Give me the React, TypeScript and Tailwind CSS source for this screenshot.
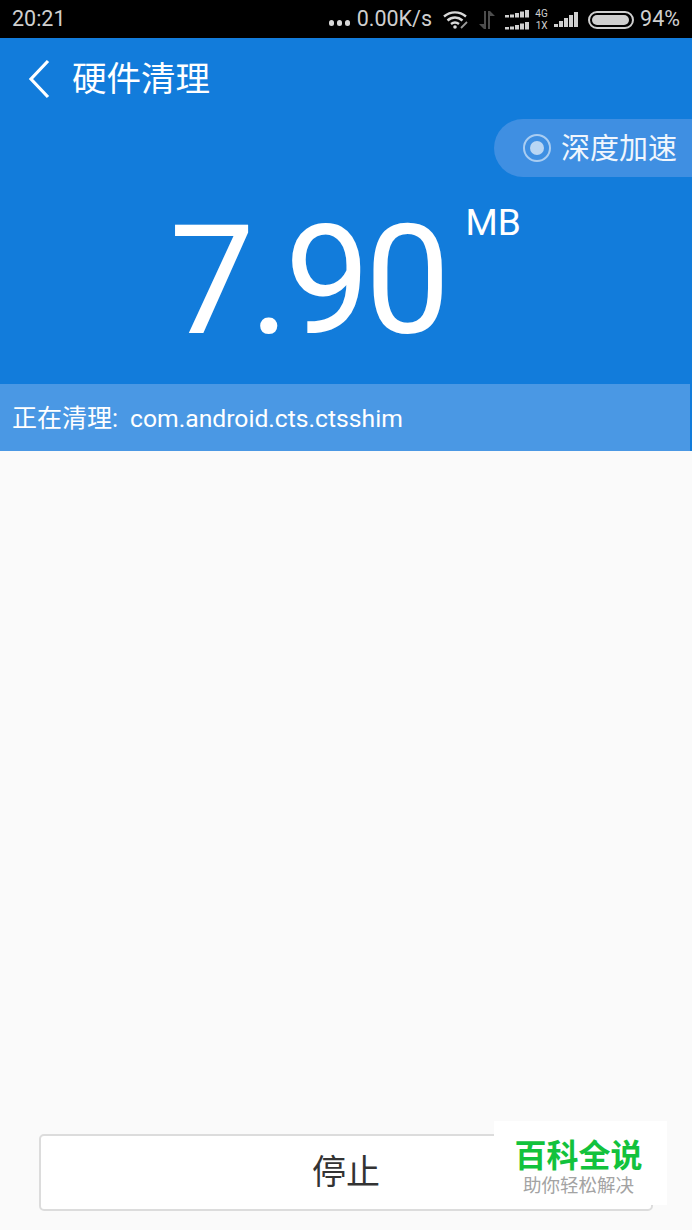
const cjk = "font-['Roboto','Noto_Sans_CJK_SC',sans-serif]"

const SignalBars = ({ className = '' }: { className?: string }) => (
  <svg width="24" height="8" viewBox="0 0 24 8" className={className} fill="#d0d0d0">
    <rect x="0" y="5" width="4" height="2.500" />
    <rect x="5" y="4.500" width="4" height="3" />
    <rect x="10" y="3" width="4" height="4.500" />
    <rect x="15" y="1.500" width="4" height="6" />
    <rect x="20" y="0" width="4" height="7.500" />
  </svg>
)

const StatusBar = () => (
  <div className="flex h-[38px] items-center bg-black pl-3 pr-3 pt-[1px] text-[21.500px] text-[#cfcfcf]">
    <span>20:21</span>
    <div className="ml-auto flex items-center">
      <div className="mt-[6px] flex gap-[3px]">
        <span className="h-[6px] w-[5px] rounded-full bg-[#d8d8d8]" />
        <span className="h-[6px] w-[5px] rounded-full bg-[#d8d8d8]" />
        <span className="h-[6px] w-[5px] rounded-full bg-[#d8d8d8]" />
      </div>
      <span className="ml-[7px]">0.00K/s</span>
      {/* wifi */}
      <svg width="26" height="20" viewBox="0 0 26 20" className="ml-[11px]" fill="none" stroke="#d8d8d8" strokeWidth="2.400">
        <path d="M1 6.500C7.500 1 16.500 1 23 6.500" />
        <path d="M4.500 10.500C9 6.500 15 6.500 19.500 10.500" />
        <path d="M8 14C10.500 12 13.500 12 16 14" />
        <circle cx="12" cy="17" r="1.800" fill="#d8d8d8" stroke="none" />
        <path d="M18 18L24 12" strokeWidth="1.800" stroke="#9a9a9a" />
      </svg>
      {/* data arrows */}
      <svg width="18" height="20" viewBox="0 0 18 20" className="ml-[9px]" fill="#4d4d4d">
        <path d="M6 1h2v18H6l-5-5h5z" />
        <path d="M10 1h2l5 5h-5v13h-2z" />
      </svg>
      <div className="ml-[9px] flex flex-col gap-[4px]">
        <SignalBars />
        <SignalBars />
      </div>
      <div className="ml-[5px] flex w-[15px] flex-col text-center text-[10px] leading-[12px]">
        <span>4G</span>
        <span>1X</span>
      </div>
      <svg width="24" height="16" viewBox="0 0 24 16" className="ml-[5px]" fill="#d0d0d0">
        <rect x="0" y="12" width="4" height="3" />
        <rect x="5" y="9" width="4" height="6" />
        <rect x="10" y="6" width="4" height="9" />
        <rect x="15" y="3" width="4" height="12" />
        <rect x="20" y="0" width="4" height="15" />
      </svg>
      {/* battery */}
      <div className="ml-[10px] flex h-[18px] w-[46px] items-center rounded-full border-2 border-[#cfcfcf] p-[2px]">
        <div className="h-full w-[37px] rounded-full bg-[#cfcfcf]" />
      </div>
      <span className="ml-[6px]">94%</span>
    </div>
  </div>
)

export default function App() {
  return (
    <div className={`relative flex h-[1230px] w-[692px] flex-col overflow-hidden bg-[#fafafa] ${cjk}`}>
      <StatusBar />

      <div className="bg-[#127cdb] text-white">
        <div className="flex h-[81px] items-center pl-[28px]">
          <svg width="24" height="40" viewBox="0 0 24 40" fill="none" stroke="#fff" strokeWidth="3.200">
            <path d="M20 2L3 20l17 18" />
          </svg>
          <span className="ml-[20px] mt-[1px] text-[34.500px] leading-none">硬件清理</span>
        </div>

        <div className="flex justify-end">
          <div className="flex h-[58px] w-[198px] items-center rounded-l-full bg-[#3f8fe2] pl-[29px]">
            <div className="flex h-[28px] w-[28px] items-center justify-center rounded-full border-2 border-[#a9cdf2]">
              <div className="h-[14px] w-[14px] rounded-full bg-[#b9d6f4]" />
            </div>
            <span className="ml-[10px] mt-[2px] text-[29px] leading-none text-[#f0f6fd]">深度加速</span>
          </div>
        </div>

        <div className="flex h-[207px] justify-center pr-[2px]">
          <span className="mt-[19px] text-[152px] font-normal leading-[170px] tracking-[-5px]">7.90</span>
          <span className="ml-[20px] mt-[26px] text-[37px] leading-[40px]">MB</span>
        </div>
      </div>

      <div className="flex h-[67px] items-center border-r-2 border-[#127cdb] bg-[#4a98e4] pl-3 pt-[2px] text-white">
        <span className="text-[25px]">正在清理:</span>
        <span className="ml-[12px] text-[24.700px]">com.android.cts.ctsshim</span>
      </div>

      <div className="mb-[19px] mt-auto ml-[39px] flex h-[77px] w-[614px] items-center justify-center self-start rounded-[5px] border-2 border-[#dcdcdc] bg-white text-[34px] text-[#333]">
        停止
      </div>

      {/* watermark */}
      <div className="absolute left-[494px] top-[1121px] flex h-[84px] w-[173px] flex-col items-center bg-white pr-[4px] pt-[17px]">
        <span className="text-[32px] font-bold leading-[36px] text-[#12c23c]">百科全说</span>
        <span className="text-[18.500px] leading-[24px] text-[#a3a3a3]">助你轻松解决</span>
      </div>
    </div>
  )
}
